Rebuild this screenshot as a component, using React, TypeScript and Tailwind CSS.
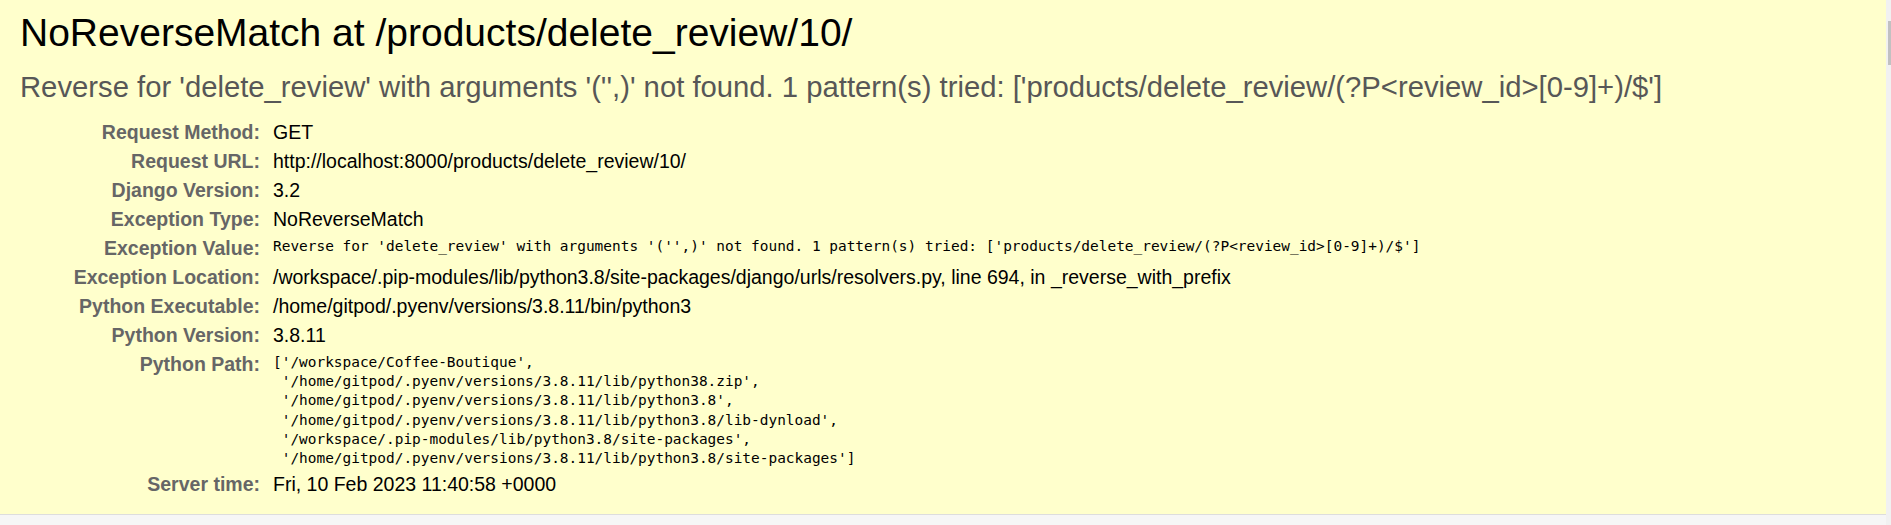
import React from "react";

const sans = { fontFamily: '"Liberation Sans", Arial, sans-serif' };

type Row = { label: string; value: React.ReactNode; mono?: boolean };

const pathLines = [
  "['/workspace/Coffee-Boutique',",
  " '/home/gitpod/.pyenv/versions/3.8.11/lib/python38.zip',",
  " '/home/gitpod/.pyenv/versions/3.8.11/lib/python3.8',",
  " '/home/gitpod/.pyenv/versions/3.8.11/lib/python3.8/lib-dynload',",
  " '/workspace/.pip-modules/lib/python3.8/site-packages',",
  " '/home/gitpod/.pyenv/versions/3.8.11/lib/python3.8/site-packages']",
];

const excValue =
  "Reverse for 'delete_review' with arguments '('',)' not found. 1 pattern(s) tried: ['products/delete_review/(?P<review_id>[0-9]+)/$']";

export default function App() {
  const rows: Row[] = [
    { label: "Request Method:", value: "GET" },
    { label: "Request URL:", value: "http://localhost:8000/products/delete_review/10/" },
    { label: "Django Version:", value: "3.2" },
    { label: "Exception Type:", value: "NoReverseMatch" },
    { label: "Exception Value:", value: excValue, mono: true },
    {
      label: "Exception Location:",
      value:
        "/workspace/.pip-modules/lib/python3.8/site-packages/django/urls/resolvers.py, line 694, in _reverse_with_prefix",
    },
    { label: "Python Executable:", value: "/home/gitpod/.pyenv/versions/3.8.11/bin/python3" },
    { label: "Python Version:", value: "3.8.11" },
    { label: "Python Path:", value: pathLines.join("\n"), mono: true },
    { label: "Server time:", value: "Fri, 10 Feb 2023 11:40:58 +0000" },
  ];

  return (
    <div className="flex h-[525px] w-full overflow-hidden bg-white" style={sans}>
      <div className="flex min-w-0 flex-1 flex-col">
        <div className="h-[515px] shrink-0 border-b border-[#dddddd] bg-[#ffffcc] px-[20px] pt-[10px]">
          <h1 className="text-[39px] font-normal leading-[45px] text-black">
            NoReverseMatch at /products/delete_review/10/
          </h1>
          <div className="mt-[15px] whitespace-pre text-[29.25px] leading-[34px] text-[#575757]">
            {excValue}
          </div>
          <div className="mt-[14px] flex flex-col">
            {rows.map((r) => (
              <div key={r.label} className="flex">
                <div className="w-[250px] shrink-0 py-[2px] pr-[10px] text-right text-[19.5px] font-bold leading-[25px] text-[#666666]">
                  {r.label}
                </div>
                {r.mono ? (
                  <div
                    className="whitespace-pre py-[2px] pl-[3px] pt-[3px] text-[14.45px] leading-[19.2px] text-black"
                    style={{ fontFamily: '"DejaVu Sans Mono", "Liberation Mono", monospace' }}
                  >
                    {r.value}
                  </div>
                ) : (
                  <div className="whitespace-nowrap py-[2px] pl-[3px] text-[19.5px] leading-[25px] text-black">
                    {r.value}
                  </div>
                )}
              </div>
            ))}
          </div>
        </div>
        <div className="flex-1 bg-[#f6f6f6]" />
      </div>
      <div className="flex w-[5px] shrink-0 flex-col items-end bg-[#f1f1f1] pt-[21px]">
        <div className="h-[44px] w-[3px] bg-[#c1c1c1]" />
      </div>
    </div>
  );
}
